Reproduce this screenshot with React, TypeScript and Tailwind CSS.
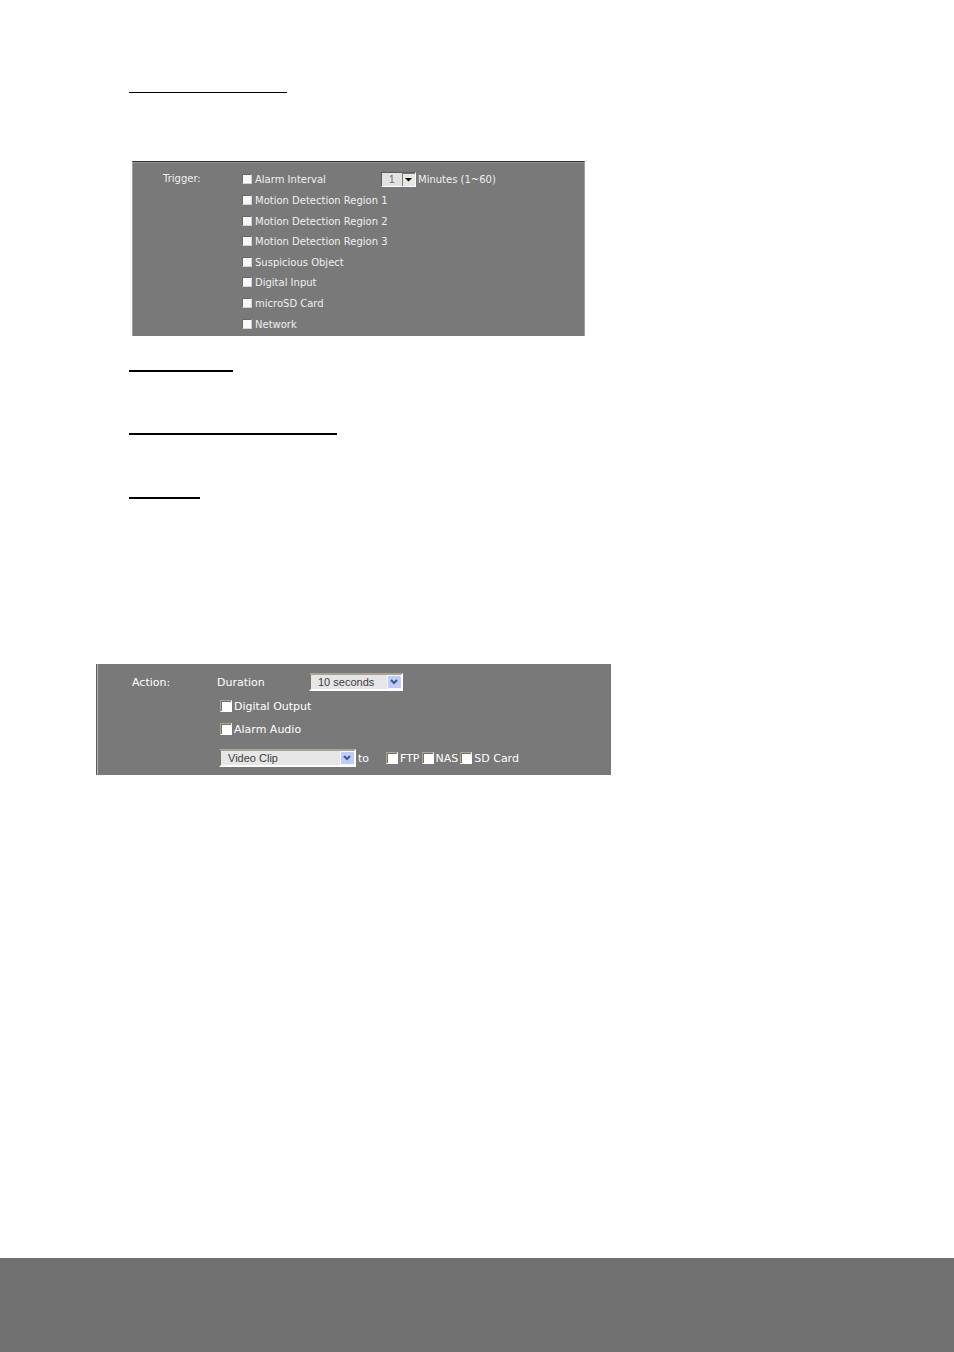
import type { ReactNode } from 'react';
import clsx from 'clsx';

const triggers = [
  'Alarm Interval',
  'Motion Detection Region 1',
  'Motion Detection Region 2',
  'Motion Detection Region 3',
  'Suspicious Object',
  'Digital Input',
  'microSD Card',
  'Network',
];

const targets = ['FTP', 'NAS', 'SD Card'];

function Check({ label, small = false }: { label: string; small?: boolean }) {
  return (
    <label className={clsx('flex items-center whitespace-nowrap', small ? 'gap-[3px]' : 'gap-[2px]')}>
      <input
        type="checkbox"
        className={clsx(
          'appearance-none shrink-0 border',
          small
            ? 'size-[10px] bg-[#f8f8f8] border-t-[#686868] border-l-[#686868] border-r-[#d2d2d2] border-b-[#d2d2d2]'
            : 'size-[12px] bg-white border-t-[#aaa592] border-l-[#aaa592] border-r-white border-b-white shadow-[inset_1px_1px_0_#777264]'
        )}
      />
      <span className={clsx('pt-px', small ? 'leading-[13px]' : 'leading-[17px]')}>{label}</span>
    </label>
  );
}

function Select({ label, className, children }: { label: string; className: string; children: ReactNode }) {
  return (
    <div className={clsx('relative shrink-0', className)}>
      <select
        aria-label={label}
        className="block w-full h-[18px] appearance-none bg-[#e6e6e6] border-2 border-t-[#a8a492] border-l-[#7d7868] border-r-white border-b-white pl-[7px] font-['Liberation_Sans',sans-serif] text-[11px] leading-[14px] text-[#3c3c3c]"
      >
        {children}
      </select>
      <svg viewBox="0 0 14 14" className="absolute right-[2px] top-[2px] size-[14px] pointer-events-none">
        <rect width="14" height="14" fill="#f4f6ff" />
        <rect x="1" y="1" width="13" height="12" rx="1" fill="#bccdfa" />
        <path d="M4 5l3 3 3-3" fill="none" stroke="#41588f" strokeWidth="2" />
      </svg>
    </div>
  );
}

function TriggerPanel() {
  return (
    <section className="flex w-full max-w-[453px] mt-[68px] ml-[132px] pt-[7px] pb-[2px] bg-[#797979] border-t border-t-[#303030] border-x border-x-[#a0a0a0] shadow-[inset_0_1px_0_#929292] font-['DejaVu_Sans',sans-serif] text-[10px] leading-[14px] text-[#f0f0f0]">
      <div className="w-[109px] pl-[30px] pt-[3px]">Trigger:</div>
      <div className="grid flex-1 auto-rows-fr min-h-[165px]">
        {triggers.map((name, i) => (
          <div key={name} className="flex items-center">
            <div className={clsx(i === 0 && 'w-[139px]')}>
              <Check label={name} small />
            </div>
            {i === 0 && (
              <div className="flex items-center gap-[2px]">
                <div className="relative w-[35px]">
                  <select
                    aria-label="Minutes"
                    className="block w-full h-[15px] appearance-none bg-[#e2e2e0] border border-t-[#5c5c5c] border-l-[#5c5c5c] border-r-white border-b-white pl-[7px] font-['Liberation_Sans',sans-serif] text-[10px] leading-[13px] text-[#6a6a6a]"
                  >
                    <option>1</option>
                  </select>
                  <svg viewBox="0 0 13 13" className="absolute right-px top-px size-[13px] pointer-events-none">
                    <rect width="13" height="13" fill="#777" />
                    <rect x="1" y="1" width="12" height="12" fill="#e8e8e2" />
                    <path d="M3 5h7L6.500 8.500z" fill="#000" />
                  </svg>
                </div>
                <span className="pt-px leading-[13px] whitespace-nowrap">Minutes (1~60)</span>
              </div>
            )}
          </div>
        ))}
      </div>
    </section>
  );
}

function ActionPanel() {
  return (
    <section className="flex w-full max-w-[515px] mt-[165px] ml-[96px] pt-[9px] pb-[8px] bg-[#797979] border-l border-l-[#5a5a5a] shadow-[inset_1px_0_0_#b4b4b4] font-['DejaVu_Sans',sans-serif] text-[11px] leading-[17px] text-white">
      <div className="w-[120px] pl-[35px] pt-px">Action:</div>
      <div className="flex-1">
        <div className="flex items-center">
          <div className="w-[92px] pt-px">Duration</div>
          <Select label="Duration" className="w-[94px]">
            <option>10 seconds</option>
          </Select>
        </div>
        <div className="flex flex-col gap-[5px] pl-[3px] pt-[6px]">
          <Check label="Digital Output" />
          <Check label="Alarm Audio" />
        </div>
        <div className="flex items-center pl-[2px] pt-[11px]">
          <Select label="Recording" className="w-[137px]">
            <option>Video Clip</option>
          </Select>
          <span className="w-[30px] pl-[2px] pt-px">to</span>
          <div className="flex gap-[2px]">
            {targets.map((name) => (
              <Check key={name} label={name} />
            ))}
          </div>
        </div>
      </div>
    </section>
  );
}

export default function App() {
  return (
    <div className="flex flex-col min-h-screen bg-white">
      <main className="flex-1 pt-[92px]">
        <hr className="w-[158px] ml-[129px] border-0 h-px bg-black" />
        <TriggerPanel />
        <hr className="w-[104px] ml-[129px] mt-[34px] border-0 h-[2px] bg-black" />
        <hr className="w-[208px] ml-[129px] mt-[61px] border-0 h-[2px] bg-black" />
        <hr className="w-[71px] ml-[129px] mt-[62px] border-0 h-[2px] bg-black" />
        <ActionPanel />
      </main>
      <footer className="h-[94px] bg-[#717171]" />
    </div>
  );
}
